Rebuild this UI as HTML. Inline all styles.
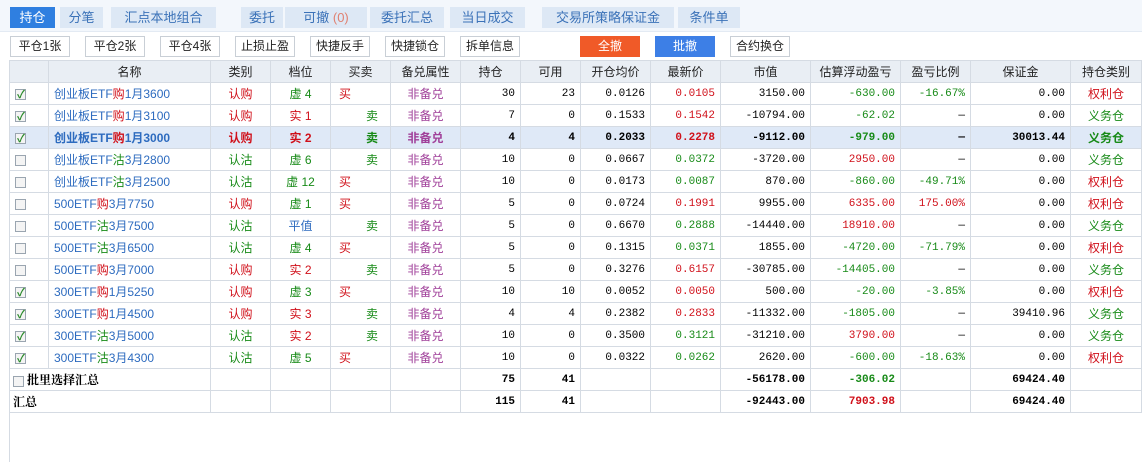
<!DOCTYPE html><html><head><meta charset="utf-8"><style>
*{margin:0;padding:0;box-sizing:border-box}
body{width:1142px;height:462px;background:#fff;font-family:"Liberation Sans","Noto Sans CJK SC",sans-serif;font-size:12px;position:relative;overflow:hidden}
.top{position:absolute;left:0;top:0;width:1142px;height:32px;background:#f3f7fc;border-bottom:1px solid #e3eaf3}
.tab{position:absolute;top:7px;height:21px;line-height:21px;text-align:center;background:#dde8f5;color:#3b72b8;font-size:13px}
.tab.on{background:#2f7fe0;color:#fff}
.btn{position:absolute;top:36px;height:21px;line-height:19px;width:60px;text-align:center;border:1px solid #c9cfd6;background:#fff;color:#222}
table{position:absolute;left:9px;top:60px;border-collapse:collapse;table-layout:fixed;width:1132px}
td,th{border:1px solid #d5dbe3;height:22px;padding:0 5px;white-space:nowrap;overflow:hidden;font-weight:normal}
th{background:#e9eef4;color:#222;font-size:12px;text-align:center;height:22px}
td{font-size:12px}
.n{font-family:"Liberation Mono",monospace;font-size:11px;text-align:right}
.c{text-align:center}
.r{color:#d0101a}.g{color:#178a17}.b{color:#2d6bbf}.p{color:#a0409a}
.nm{color:#2d6bbf}
.cb{display:inline-block;width:11px;height:11px;border:1px solid #9aa5b0;background:#f4f4f4;vertical-align:middle;position:relative}
.cb.k:after{content:"✓";position:absolute;left:1px;top:-4px;font-size:11px;color:#2a8a2a;font-weight:bold}
tr.hl td{background:#dfe9f7;font-weight:bold}
.bd td{font-weight:bold;font-family:"Liberation Serif","Noto Serif CJK SC",serif}
.bd td.n{font-family:"Liberation Mono",monospace}
.bm{text-align:left;padding-left:8px}.sm{text-align:right;padding-right:12px}
</style></head><body>
<div class="top">
<div class="tab on" style="left:10px;width:45px">持仓</div>
<div class="tab" style="left:60px;width:43px">分笔</div>
<div class="tab" style="left:111px;width:105px">汇点本地组合</div>
<div class="tab" style="left:241px;width:42px">委托</div>
<div class="tab" style="left:285px;width:82px">可撤 <span style="color:#e08070">(0)</span></div>
<div class="tab" style="left:370px;width:74px">委托汇总</div>
<div class="tab" style="left:450px;width:75px">当日成交</div>
<div class="tab" style="left:542px;width:132px">交易所策略保证金</div>
<div class="tab" style="left:678px;width:62px">条件单</div>
</div>
<div class="btn" style="left:10px">平仓1张</div>
<div class="btn" style="left:85px">平仓2张</div>
<div class="btn" style="left:160px">平仓4张</div>
<div class="btn" style="left:235px">止损止盈</div>
<div class="btn" style="left:310px">快捷反手</div>
<div class="btn" style="left:385px">快捷锁仓</div>
<div class="btn" style="left:460px">拆单信息</div>
<div class="btn" style="left:580px;background:#f05a28;color:#fff;border-color:#f05a28">全撤</div>
<div class="btn" style="left:655px;background:#3d7fe6;color:#fff;border-color:#3d7fe6">批撤</div>
<div class="btn" style="left:730px">合约换仓</div>
<table>
<colgroup><col style="width:39px"><col style="width:162px"><col style="width:60px"><col style="width:60px"><col style="width:60px"><col style="width:70px"><col style="width:60px"><col style="width:60px"><col style="width:70px"><col style="width:70px"><col style="width:90px"><col style="width:90px"><col style="width:70px"><col style="width:100px"><col style="width:71px"></colgroup>
<tr><th></th><th>名称</th><th>类别</th><th>档位</th><th>买卖</th><th>备兑属性</th><th>持仓</th><th>可用</th><th>开仓均价</th><th>最新价</th><th>市值</th><th>估算浮动盈亏</th><th>盈亏比例</th><th>保证金</th><th>持仓类别</th></tr>
<tr><td><span class="cb k"></span></td><td class="nm">创业板ETF<span class="r">购</span>1月3600</td><td class="c r">认购</td><td class="c g">虚 4</td><td class="r bm">买</td><td class="c p">非备兑</td><td class="n">30</td><td class="n">23</td><td class="n">0.0126</td><td class="n r">0.0105</td><td class="n">3150.00</td><td class="n g">-630.00</td><td class="n g">-16.67%</td><td class="n">0.00</td><td class="c r">权利仓</td></tr>
<tr><td><span class="cb k"></span></td><td class="nm">创业板ETF<span class="r">购</span>1月3100</td><td class="c r">认购</td><td class="c r">实 1</td><td class="g sm">卖</td><td class="c p">非备兑</td><td class="n">7</td><td class="n">0</td><td class="n">0.1533</td><td class="n r">0.1542</td><td class="n">-10794.00</td><td class="n g">-62.02</td><td class="n">—</td><td class="n">0.00</td><td class="c g">义务仓</td></tr>
<tr class="hl"><td><span class="cb k"></span></td><td class="nm">创业板ETF<span class="r">购</span>1月3000</td><td class="c r">认购</td><td class="c r">实 2</td><td class="g sm">卖</td><td class="c p">非备兑</td><td class="n">4</td><td class="n">4</td><td class="n">0.2033</td><td class="n r">0.2278</td><td class="n">-9112.00</td><td class="n g">-979.00</td><td class="n">—</td><td class="n">30013.44</td><td class="c g">义务仓</td></tr>
<tr><td><span class="cb"></span></td><td class="nm">创业板ETF<span class="g">沽</span>3月2800</td><td class="c g">认沽</td><td class="c g">虚 6</td><td class="g sm">卖</td><td class="c p">非备兑</td><td class="n">10</td><td class="n">0</td><td class="n">0.0667</td><td class="n g">0.0372</td><td class="n">-3720.00</td><td class="n r">2950.00</td><td class="n">—</td><td class="n">0.00</td><td class="c g">义务仓</td></tr>
<tr><td><span class="cb"></span></td><td class="nm">创业板ETF<span class="g">沽</span>3月2500</td><td class="c g">认沽</td><td class="c g">虚 12</td><td class="r bm">买</td><td class="c p">非备兑</td><td class="n">10</td><td class="n">0</td><td class="n">0.0173</td><td class="n g">0.0087</td><td class="n">870.00</td><td class="n g">-860.00</td><td class="n g">-49.71%</td><td class="n">0.00</td><td class="c r">权利仓</td></tr>
<tr><td><span class="cb"></span></td><td class="nm">500ETF<span class="r">购</span>3月7750</td><td class="c r">认购</td><td class="c g">虚 1</td><td class="r bm">买</td><td class="c p">非备兑</td><td class="n">5</td><td class="n">0</td><td class="n">0.0724</td><td class="n r">0.1991</td><td class="n">9955.00</td><td class="n r">6335.00</td><td class="n r">175.00%</td><td class="n">0.00</td><td class="c r">权利仓</td></tr>
<tr><td><span class="cb"></span></td><td class="nm">500ETF<span class="g">沽</span>3月7500</td><td class="c g">认沽</td><td class="c b">平值</td><td class="g sm">卖</td><td class="c p">非备兑</td><td class="n">5</td><td class="n">0</td><td class="n">0.6670</td><td class="n g">0.2888</td><td class="n">-14440.00</td><td class="n r">18910.00</td><td class="n">—</td><td class="n">0.00</td><td class="c g">义务仓</td></tr>
<tr><td><span class="cb"></span></td><td class="nm">500ETF<span class="g">沽</span>3月6500</td><td class="c g">认沽</td><td class="c g">虚 4</td><td class="r bm">买</td><td class="c p">非备兑</td><td class="n">5</td><td class="n">0</td><td class="n">0.1315</td><td class="n g">0.0371</td><td class="n">1855.00</td><td class="n g">-4720.00</td><td class="n g">-71.79%</td><td class="n">0.00</td><td class="c r">权利仓</td></tr>
<tr><td><span class="cb"></span></td><td class="nm">500ETF<span class="r">购</span>3月7000</td><td class="c r">认购</td><td class="c r">实 2</td><td class="g sm">卖</td><td class="c p">非备兑</td><td class="n">5</td><td class="n">0</td><td class="n">0.3276</td><td class="n r">0.6157</td><td class="n">-30785.00</td><td class="n g">-14405.00</td><td class="n">—</td><td class="n">0.00</td><td class="c g">义务仓</td></tr>
<tr><td><span class="cb k"></span></td><td class="nm">300ETF<span class="r">购</span>1月5250</td><td class="c r">认购</td><td class="c g">虚 3</td><td class="r bm">买</td><td class="c p">非备兑</td><td class="n">10</td><td class="n">10</td><td class="n">0.0052</td><td class="n r">0.0050</td><td class="n">500.00</td><td class="n g">-20.00</td><td class="n g">-3.85%</td><td class="n">0.00</td><td class="c r">权利仓</td></tr>
<tr><td><span class="cb k"></span></td><td class="nm">300ETF<span class="r">购</span>1月4500</td><td class="c r">认购</td><td class="c r">实 3</td><td class="g sm">卖</td><td class="c p">非备兑</td><td class="n">4</td><td class="n">4</td><td class="n">0.2382</td><td class="n r">0.2833</td><td class="n">-11332.00</td><td class="n g">-1805.00</td><td class="n">—</td><td class="n">39410.96</td><td class="c g">义务仓</td></tr>
<tr><td><span class="cb k"></span></td><td class="nm">300ETF<span class="g">沽</span>3月5000</td><td class="c g">认沽</td><td class="c r">实 2</td><td class="g sm">卖</td><td class="c p">非备兑</td><td class="n">10</td><td class="n">0</td><td class="n">0.3500</td><td class="n g">0.3121</td><td class="n">-31210.00</td><td class="n r">3790.00</td><td class="n">—</td><td class="n">0.00</td><td class="c g">义务仓</td></tr>
<tr><td><span class="cb k"></span></td><td class="nm">300ETF<span class="g">沽</span>3月4300</td><td class="c g">认沽</td><td class="c g">虚 5</td><td class="r bm">买</td><td class="c p">非备兑</td><td class="n">10</td><td class="n">0</td><td class="n">0.0322</td><td class="n g">0.0262</td><td class="n">2620.00</td><td class="n g">-600.00</td><td class="n g">-18.63%</td><td class="n">0.00</td><td class="c r">权利仓</td></tr>
<tr class="bd"><td colspan="2" style="padding-left:3px"><span class="cb"></span> 批里选择汇总</td><td></td><td></td><td></td><td></td><td class="n">75</td><td class="n">41</td><td></td><td></td><td class="n">-56178.00</td><td class="n g">-306.02</td><td></td><td class="n">69424.40</td><td></td></tr>
<tr class="bd"><td colspan="2" style="padding-left:3px">汇总</td><td></td><td></td><td></td><td></td><td class="n">115</td><td class="n">41</td><td></td><td></td><td class="n">-92443.00</td><td class="n r">7903.98</td><td></td><td class="n">69424.40</td><td></td></tr>
</table>
<div style="position:absolute;left:9px;top:412px;width:1px;height:50px;background:#d5dbe3"></div>
</body></html>
